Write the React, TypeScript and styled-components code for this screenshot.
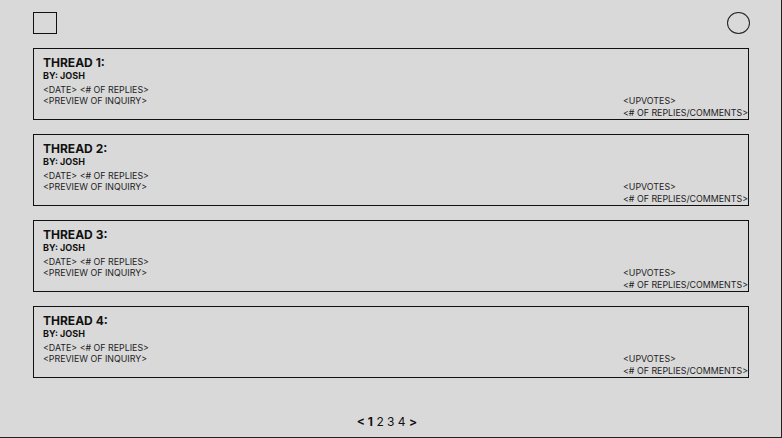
import React from "react";
import styled, { createGlobalStyle } from "styled-components";

const GlobalStyle = createGlobalStyle`
    html, body {
        margin: 0;
        padding: 0;
        background: #d9d9d9;
    }
    * {
        box-sizing: border-box;
    }
`;

const threads = [1, 2, 3, 4];

export default function App() {
    return (
        <>
            <GlobalStyle />
            <Page>
                <Header>
                    <Logo />
                    <Avatar />
                </Header>

                <ThreadList>
                    {threads.map((n) => (
                        <ThreadCard key={n}>
                            <Info>
                                <Title>THREAD {n}:</Title>
                                <Author>BY: JOSH</Author>
                                <Meta>&lt;DATE&gt; &lt;# OF REPLIES&gt;</Meta>
                                <Meta>&lt;PREVIEW OF INQUIRY&gt;</Meta>
                            </Info>
                            <Stats>
                                <StatLine>&lt;UPVOTES&gt;</StatLine>
                                <StatLine>&lt;# OF REPLIES/COMMENTS&gt;</StatLine>
                            </Stats>
                        </ThreadCard>
                    ))}
                </ThreadList>

                <Pagination>
                    <Strong>&lt; 1</Strong>
                    <PageNum> 2 3 4 </PageNum>
                    <Strong>&gt;</Strong>
                </Pagination>
            </Page>
        </>
    );
}

const Page = styled.div`
    width: 782px;
    height: 438px;
    padding: 12px 32px 0 33px;
    border-right: 1px solid #222;
    border-bottom: 1px solid #222;
    font-family: Inter, "Liberation Sans", sans-serif;
    color: #111;
    display: flex;
    flex-direction: column;
`;

const Header = styled.div`
    display: flex;
    justify-content: space-between;
    align-items: flex-start;
    height: 22px;
    margin-bottom: 14px;
`;

const Logo = styled.div`
    width: 24px;
    height: 22px;
    border: 1px solid #111;
`;

const Avatar = styled.div`
    width: 23px;
    height: 22px;
    margin-right: -1px;
    border: 1px solid #222;
    border-radius: 50%;
`;

const ThreadList = styled.div`
    display: flex;
    flex-direction: column;
    gap: 14px;
`;

const ThreadCard = styled.div`
    height: 72px;
    border: 1px solid #111;
    padding: 6px 0 0 9px;
    display: flex;
    justify-content: space-between;
`;

const Info = styled.div`
    display: flex;
    flex-direction: column;
`;

const Title = styled.div`
    font-size: 12px;
    line-height: 15px;
    font-weight: 700;
`;

const Author = styled.div`
    font-size: 9px;
    line-height: 11px;
    font-weight: 700;
    margin-bottom: 3px;
`;

const Meta = styled.div`
    font-size: 8.85px;
    line-height: 11px;
    color: #222;
`;

const Stats = styled.div`
    align-self: flex-end;
    display: flex;
    flex-direction: column;
`;

const StatLine = styled.div`
    font-size: 8.85px;
    line-height: 12px;
    color: #222;
    white-space: nowrap;
`;

const Pagination = styled.div`
    margin-top: auto;
    margin-bottom: 8px;
    margin-left: -8px;
    text-align: center;
    font-size: 12px;
    line-height: 14px;
`;

const Strong = styled.span`
    font-weight: 700;
    white-space: pre;
`;

const PageNum = styled.span`
    font-weight: 400;
    white-space: pre;
`;
